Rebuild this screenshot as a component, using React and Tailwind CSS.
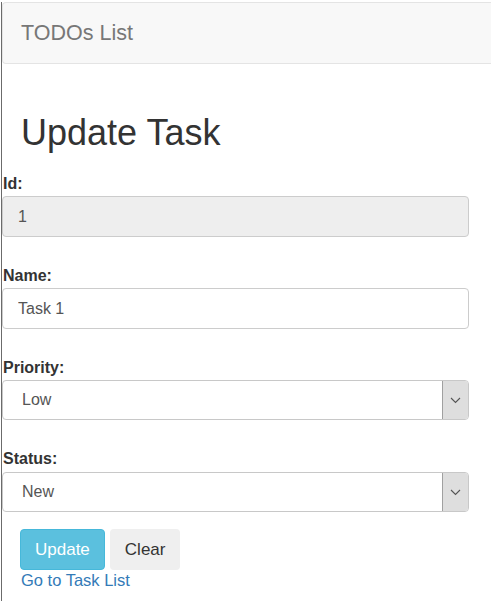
import { useState } from 'react';

const font = { fontFamily: '"Liberation Sans", Arial, sans-serif' };

function Field({ label, children }) {
  return (
    <div className="mb-[29px]">
      <label className="block pl-px text-[16px] leading-5 font-bold text-[#333] mb-[2px]">{label}</label>
      {children}
    </div>
  );
}

function FakeSelect({ value }) {
  return (
    <div className="flex h-[40px] w-[467px] rounded-[4px] border border-[#c8c8c8] bg-white overflow-hidden">
      <div className="flex-1 flex items-center pl-[19px] text-[16px] text-[#555]">{value}</div>
      <div className="w-[26px] flex items-center justify-center bg-[#dedede] border-l border-[#a0a0a0]">
        <svg width="11" height="7" viewBox="0 0 11 7">
          <polyline points="1,1 5.5,5.5 10,1" fill="none" stroke="#555" strokeWidth="1.1" />
        </svg>
      </div>
    </div>
  );
}

export default function App() {
  const [name, setName] = useState('Task 1');

  return (
    <div className="min-h-[601px] overflow-hidden bg-white" style={font}>
      <div className="ml-px min-h-[601px] border-l border-[#6b6b6b]">
        {/* Navbar */}
        <div className="mt-[2px] h-[62px] flex items-center rounded-l-[4px] border border-r-0 border-[#e4e4e4] bg-[#f8f8f8] pl-[18px]">
          <span className="text-[21.5px] text-[#777]">TODOs List</span>
        </div>

        <h1 className="mt-[49px] pl-[19px] text-[36px] leading-[40px] text-[#333]">Update Task</h1>

        <div className="mt-[21px]">
          <Field label="Id:">
            <div className="h-[41px] w-[467px] flex items-center rounded-[4px] border border-[#ccc] bg-[#eee] pl-[15px] text-[16px] text-[#555]">1</div>
          </Field>

          <Field label="Name:">
            <input
              value={name}
              onChange={e => setName(e.target.value)}
              className="block h-[41px] w-[467px] rounded-[4px] border border-[#ccc] bg-white pl-[15px] text-[16px] text-[#555] outline-none"
            />
          </Field>

          <Field label="Priority:">
            <FakeSelect value="Low" />
          </Field>

          <div className="mb-[17px]">
            <label className="block pl-px text-[16px] leading-5 font-bold text-[#333] mb-[3px]">Status:</label>
            <FakeSelect value="New" />
          </div>
        </div>

        <div className="pl-[18px]">
          <div className="flex gap-[5px]">
            <button className="h-[41px] px-[14px] rounded-[4px] border border-[#46b8da] bg-[#5bc0de] text-[17px] text-white">Update</button>
            <button className="h-[41px] px-[15px] rounded-[4px] bg-[#efefef] text-[17px] text-[#333]">Clear</button>
          </div>
          <a href="#" className="block pl-px text-[16.5px] leading-[21px] text-[#337ab7]">Go to Task List</a>
        </div>
      </div>
    </div>
  );
}
